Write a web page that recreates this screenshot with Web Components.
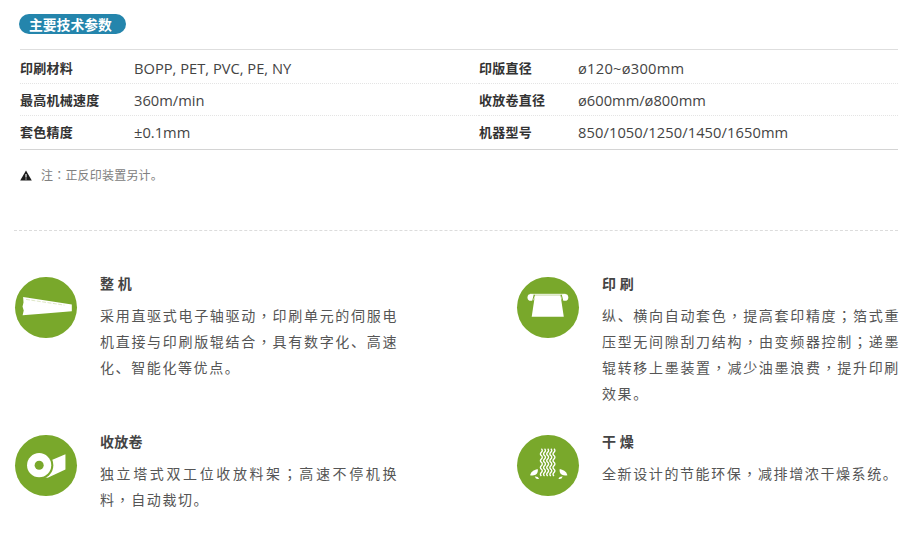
<!DOCTYPE html>
<html lang="zh">
<head>
<meta charset="utf-8">
<title>主要技术参数</title>
<style>
html, body { margin: 0; background: #fff; }
body { font-family: "Open Sans", "Noto Sans CJK SC", sans-serif; color: #444; }
/* the reference centres these three marks in their box, the TC cut does that too */
i { font-style: normal; font-family: "Noto Sans CJK TC", sans-serif; }
</style>
</head>
<body>
<tech-page>
  <spec-badge slot="badge">主要技术参数</spec-badge>
  <spec-table slot="table">
    <spec-cell label="印刷材料" w="114">BOPP, PET, PVC, PE, NY</spec-cell>
    <spec-cell label="印版直径" w="99" style="letter-spacing:.25px">ø120~ø300mm</spec-cell>
    <spec-cell label="最高机械速度" w="114">360m/min</spec-cell>
    <spec-cell label="收放卷直径" w="99">ø600mm/ø800mm</spec-cell>
    <spec-cell label="套色精度" w="114">±0.1mm</spec-cell>
    <spec-cell label="机器型号" w="99" style="letter-spacing:.08px">850/1050/1250/1450/1650mm</spec-cell>
  </spec-table>
  <note-line slot="note">注<i lang="zh-TW">：</i>正反印装置另计。</note-line>

  <feature-card slot="features" heading="整 机">
    <svg slot="icon" viewBox="0 0 62 62">
      <path d="M8 20.3 L13 21 L57.5 28 L57.5 34.8 L30 37.2 L7.5 39 L8.6 34 L7.4 30 L8.4 26 Z" fill="#fff"/>
      <path d="M11 22.8 L50 28.6" stroke="#cfdcae" stroke-width=".7" stroke-dasharray="4 1.5" fill="none"/>
    </svg>
    <span>采用直驱式电子轴驱动<i lang="zh-TW">，</i>印刷单元的伺服电</span>
    <span>机直接与印刷版辊结合<i lang="zh-TW">，</i>具有数字化、高速</span>
    <span>化、智能化等优点。</span>
  </feature-card>
  <feature-card slot="features" heading="印 刷">
    <svg slot="icon" viewBox="0 0 62 62">
      <path d="M18 18.5 H44 L47.3 40.3 H14.7 Z" fill="#fff"/>
      <path d="M13 17.6 H49" stroke="#fff" stroke-width="1" fill="none"/>
      <ellipse cx="14" cy="20.8" rx="3.6" ry="3.4" fill="#fff"/>
      <ellipse cx="48.3" cy="20.8" rx="3.6" ry="3.4" fill="#fff"/>
      <path d="M17.2 18 L15.5 25 M44.8 18 L46.5 25" stroke="var(--green)" stroke-width="1" fill="none"/>
    </svg>
    <span>纵、横向自动套色<i lang="zh-TW">，</i>提高套印精度<i lang="zh-TW">；</i>箔式重</span>
    <span>压型无间隙刮刀结构<i lang="zh-TW">，</i>由变频器控制<i lang="zh-TW">；</i>递墨</span>
    <span>辊转移上墨装置<i lang="zh-TW">，</i>减少油墨浪费<i lang="zh-TW">，</i>提升印刷</span>
    <span>效果。</span>
  </feature-card>
  <feature-card slot="features" heading="收放卷">
    <svg slot="icon" viewBox="0 0 62 62">
      <path d="M36 26 L51 19.5 V35 L33 43.5 L30 43 Z" fill="#fff"/>
      <circle cx="24.3" cy="30.7" r="14.4" fill="var(--green)"/>
      <circle cx="24.3" cy="30.7" r="12.3" fill="#fff"/>
      <circle cx="24.3" cy="30.7" r="4.6" fill="var(--green)"/>
    </svg>
    <span>独立塔式双工位收放料架<i lang="zh-TW">；</i>高速不停机换</span>
    <span>料<i lang="zh-TW">，</i>自动裁切。</span>
  </feature-card>
  <feature-card slot="features" heading="干 燥">
    <svg slot="icon" viewBox="0 0 62 62">
      <g fill="none" stroke="#fff" stroke-width="1.4">
        <path d="M24.5 14q1.9 1.7 0 3.45t0 3.45t0 3.45t0 3.45t0 3.45t0 3.45t0 3.45t0 3.45"/>
        <path d="M27.7 14q1.9 1.7 0 3.45t0 3.45t0 3.45t0 3.45t0 3.45t0 3.45t0 3.45t0 3.45"/>
        <path d="M30.9 14q1.9 1.7 0 3.45t0 3.45t0 3.45t0 3.45t0 3.45t0 3.45t0 3.45t0 3.45"/>
        <path d="M34.1 14q1.9 1.7 0 3.45t0 3.45t0 3.45t0 3.45t0 3.45t0 3.45t0 3.45t0 3.45"/>
        <path d="M37.3 14q1.9 1.7 0 3.45t0 3.45t0 3.45t0 3.45t0 3.45t0 3.45t0 3.45t0 3.45"/>
      </g>
      <g fill="#fff">
        <path d="M20.8 34.6 Q21.6 38.5 18.6 40.4 Q15.8 41.8 13 40.8 Q13.8 37.8 16.2 36.4 Q18.4 35.4 20.8 34.6 Z"/>
        <path d="M17.8 42.2 Q21.4 42 22.2 44.6 Q19 45.6 17.8 42.2 Z"/>
        <path d="M43.2 34.6 Q42.4 38.5 45.4 40.4 Q48.2 41.8 51 40.8 Q50.2 37.8 47.8 36.4 Q45.6 35.4 43.2 34.6 Z"/>
        <path d="M46.2 42.2 Q42.6 42 41.8 44.6 Q45 45.6 46.2 42.2 Z"/>
      </g>
    </svg>
    <span>全新设计的节能环保<i lang="zh-TW">，</i>减排增浓干燥系统。</span>
  </feature-card>
</tech-page>

<script>
class TechPage extends HTMLElement {
  constructor() {
    super();
    this.attachShadow({ mode: 'open' });
    this.shadowRoot.innerHTML = `
      <style>
        :host { display: block; width: 914px; height: 536px; overflow: hidden; box-sizing: border-box; padding: 14px 16px 0 14px; }
        .top { padding-left: 5px; }
        .badge { height: 35px; }
        .rule { border-top: 1px dashed #dcdcdc; margin-top: 46px; }
        .grid {
          display: grid;
          grid-template-columns: 502px 1fr;
          grid-template-rows: 158px auto;
          margin-top: 45px;
          padding-left: 1px;
        }
      </style>
      <div class="top">
        <div class="badge"><slot name="badge"></slot></div>
        <slot name="table"></slot>
        <slot name="note"></slot>
      </div>
      <div class="rule"></div>
      <div class="grid"><slot name="features"></slot></div>
    `;
  }
}

class SpecBadge extends HTMLElement {
  constructor() {
    super();
    this.attachShadow({ mode: 'open' });
    this.shadowRoot.innerHTML = `
      <style>
        :host {
          display: block; width: fit-content; height: 20px; padding: 0 14px 0 10px;
          border-radius: 10px; background: #2485ac; color: #fff;
          font: bold 13.8px/20px "Noto Sans CJK SC", sans-serif;
        }
      </style>
      <slot></slot>
    `;
  }
}

class SpecTable extends HTMLElement {
  constructor() {
    super();
    this.attachShadow({ mode: 'open' });
    this.shadowRoot.innerHTML = `
      <style>
        :host {
          display: grid; grid-template-columns: 459px 1fr;
          grid-auto-rows: 32px;
          width: 878px; margin-left: 1px; padding: 2px 0 1px;
          border-top: 1px solid #dedede; border-bottom: 1px solid #d4d4d4;
        }
      </style>
      <slot></slot>
    `;
  }
}

class SpecCell extends HTMLElement {
  static get observedAttributes() { return ['label', 'w']; }
  constructor() {
    super();
    this.attachShadow({ mode: 'open' });
  }
  attributeChangedCallback() { this.render(); }
  connectedCallback() { this.render(); }
  render() {
    this.shadowRoot.innerHTML = `
      <style>
        :host { display: flex; align-items: center; box-sizing: border-box; height: 32px; border-bottom: 1px dotted #e4e4e4; }
        :host(:nth-last-child(-n+2)) { border-bottom: 0; }
        .k { width: ${this.getAttribute('w') || 114}px; flex: none; font: bold 13px/20px "Noto Sans CJK SC", sans-serif; letter-spacing: .25px; color: #333; }
        .v { font: 14.7px/20px "Open Sans", "Noto Sans CJK SC", sans-serif; color: #444; }
      </style>
      <div class="k">${this.getAttribute('label') || ''}</div>
      <div class="v"><slot></slot></div>
    `;
  }
}

class NoteLine extends HTMLElement {
  constructor() {
    super();
    this.attachShadow({ mode: 'open' });
    this.shadowRoot.innerHTML = `
      <style>
        :host { display: flex; align-items: center; gap: 9px; margin: 16px 0 0 1px; height: 18px; font: 12px/18px "Noto Sans CJK SC", sans-serif; letter-spacing: .2px; color: #808080; }
        svg { display: block; flex: none; }
      </style>
      <svg viewBox="0 0 12 11" width="12" height="11">
        <path d="M6 0.4 L11.8 10.6 H0.2 Z" fill="#1c1c1c"/>
        <path d="M6 4 V7.6 M6 8.4 V9.5" stroke="#fff" stroke-width="1.1"/>
      </svg>
      <span><slot></slot></span>
    `;
  }
}

class FeatureCard extends HTMLElement {
  constructor() {
    super();
    this.attachShadow({ mode: 'open' });
  }
  connectedCallback() {
    this.shadowRoot.innerHTML = `
      <style>
        :host { display: flex; align-items: flex-start; --green: #79a82b; }
        .icon { width: 61.5px; height: 61px; border-radius: 50%; background: var(--green); flex: none; margin: 1px 23.5px 0 0; }
        ::slotted(svg) { display: block; width: 100%; height: 100%; }
        .body { width: 298px; margin-top: -3px; }
        h3 { margin: 0 0 9px; font: bold 14px/20px "Noto Sans CJK SC", sans-serif; letter-spacing: .3px; color: #444; }
        .txt { font: 14px/26px "Noto Sans CJK SC", sans-serif; letter-spacing: 1.6px; color: #555; }
        ::slotted(span) { display: block; text-align: justify; text-align-last: justify; }
        ::slotted(span:last-of-type) { text-align-last: left; }
      </style>
      <div class="icon"><slot name="icon"></slot></div>
      <div class="body">
        <h3>${this.getAttribute('heading') || ''}</h3>
        <div class="txt"><slot></slot></div>
      </div>
    `;
  }
}

customElements.define('tech-page', TechPage);
customElements.define('spec-badge', SpecBadge);
customElements.define('spec-table', SpecTable);
customElements.define('spec-cell', SpecCell);
customElements.define('note-line', NoteLine);
customElements.define('feature-card', FeatureCard);
</script>
</body>
</html>
